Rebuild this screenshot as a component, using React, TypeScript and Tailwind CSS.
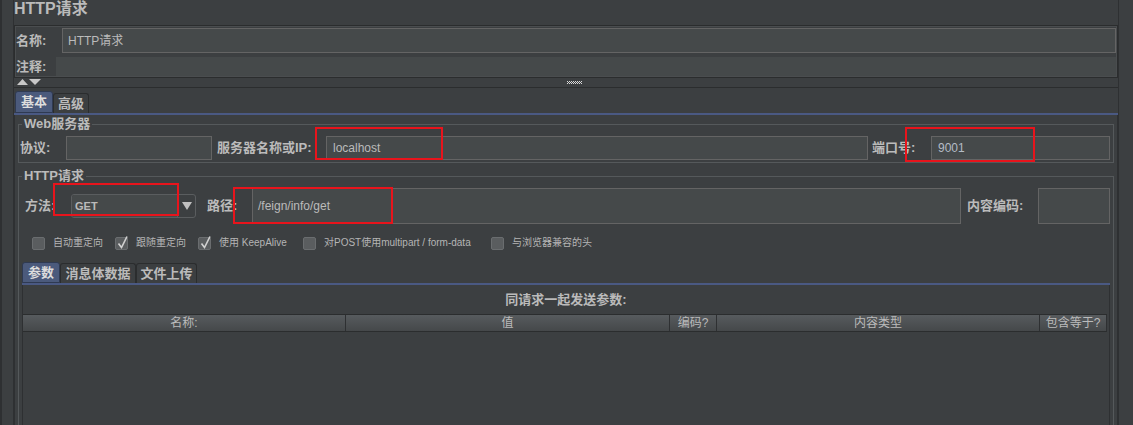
import React from "react";

function Cb({ checked }: { checked?: boolean }) {
  return (
    <span className="relative w-[13px] h-[13px] shrink-0 rounded-[2px] border border-[#6a6d6f] bg-[#5a5d5f]">
      {checked && (
        <svg className="absolute left-[0px] top-[-3px]" width="13" height="15" viewBox="0 0 13 15">
          <path d="M2.5 8.5 L5.5 12.5 L11 1.5" stroke="#d2d2d2" strokeWidth="1.6" fill="none" />
        </svg>
      )}
    </span>
  );
}

function CbItem({ checked, label, w }: { checked?: boolean; label: string; w: string }) {
  return (
    <div className={`flex items-center gap-[8px] shrink-0 ${w}`}>
      <Cb checked={checked} />
      <span className="text-[10px] leading-[14px] text-[#b5b5b5] whitespace-nowrap">{label}</span>
    </div>
  );
}

export default function App() {
  return (
    <div className="relative flex w-[1133px] h-[425px] overflow-hidden bg-[#3c3f41] text-[#bbbbbb] font-[family-name:Liberation_Sans,Noto_Sans_CJK_SC,sans-serif]">
      {/* left strip */}
      <div className="w-[14px] shrink-0 border-l-[2px] border-r border-[#2e3032]" />

      {/* main column */}
      <div className="w-[1104px] shrink-0 flex flex-col overflow-hidden">
        <div className="shrink-0 h-[22px] text-[16px] leading-[16px] font-bold pt-[1px]">HTTP请求</div>

        {/* name panel */}
        <div className="shrink-0 mt-[3px] h-[53px] border border-[#2b2d2e] shadow-[inset_0_0_0_1px_#4a4d4f] pl-[1px] pr-[1px] flex flex-col">
          <div className="shrink-0 mt-[2px] h-[25px] flex items-center">
            <div className="w-[46px] text-[13px] font-bold">名称:</div>
            <div className="flex-1 h-[25px] bg-[#45494a] border border-[#646464] px-[5px] flex items-center text-[12px]">HTTP请求</div>
          </div>
          <div className="shrink-0 mt-[4px] h-[19px] flex items-center">
            <div className="w-[40px] text-[13px] font-bold">注释:</div>
            <div className="flex-1 h-[19px] bg-[#45494a]" />
          </div>
        </div>

        {/* splitter */}
        <div className="shrink-0 relative h-[10px] border-b border-[#2b2d2e]">
          <svg className="absolute left-[3px] top-[1px]" width="24" height="7" viewBox="0 0 24 7">
            <path d="M0 6 L5.5 0 L11 6 Z" fill="#c8c8c8" />
            <path d="M12 0 L24 0 L18 6 Z" fill="#c8c8c8" />
          </svg>
          <svg className="absolute left-[553px] top-[3px]" width="15" height="3" viewBox="0 0 15 3">
            <path d="M0 0h1v1H0zM2 0h1v1H2zM4 0h1v1H4zM6 0h1v1H6zM8 0h1v1H8zM10 0h1v1h-1zM12 0h1v1h-1zM14 0h1v1h-1zM1 1h1v1H1zM3 1h1v1H3zM5 1h1v1H5zM7 1h1v1H7zM9 1h1v1H9zM11 1h1v1h-1zM13 1h1v1h-1zM0 2h1v1H0zM2 2h1v1H2zM4 2h1v1H4zM6 2h1v1H6zM8 2h1v1H8zM10 2h1v1h-1zM12 2h1v1h-1zM14 2h1v1h-1z" fill="#d8d8d8" />
          </svg>
        </div>

        {/* tabs */}
        <div className="shrink-0 mt-[3px] h-[22px] flex items-end pl-[1px]">
          <div className="w-[38px] h-[22px] rounded-t-[3px] bg-[#4b5a7c] border border-[#2f3a52] flex items-center justify-center text-[13px] font-bold text-[#dddddd]">基本</div>
          <div className="w-[36px] h-[20px] rounded-t-[3px] border border-b-0 border-[#2b2d2e] flex items-center justify-center text-[13px] font-bold">高级</div>
        </div>
        <div className="shrink-0 h-[2px] bg-[#4a5983]" />

        {/* tab content */}
        <div className="shrink-0 h-[320px] border-l border-r border-[#2e3032] pl-[3px] pr-[3px] flex flex-col">
          <fieldset className="shrink-0 mt-[2px] border border-[#55595b] p-0 m-0">
            <legend className="ml-[3px] px-[2px] text-[13px] leading-[14px] font-bold">Web服务器</legend>
            <div className="pt-[5px] pb-[2px] pr-[3px] h-[31px] flex items-center">
              <div className="w-[47px] pl-[1px] text-[13px] font-bold">协议:</div>
              <div className="w-[146px] h-[24px] bg-[#45494a] border border-[#646464]" />
              <div className="w-[114px] pl-[5px] text-[13px] font-bold whitespace-nowrap">服务器名称或IP:</div>
              <div className="flex-1 h-[24px] bg-[#45494a] border border-[#646464] px-[6px] flex items-center text-[12px]">localhost</div>
              <div className="w-[63px] pl-[4px] text-[13px] font-bold">端口号:</div>
              <div className="w-[179px] h-[24px] bg-[#45494a] border border-[#646464] px-[6px] flex items-center text-[12px] text-[#b4bcc6]">9001</div>
            </div>
          </fieldset>

          <fieldset className="shrink-0 mt-[6px] h-[300px] border border-b-0 border-[#55595b] p-0 m-0">
            <legend className="ml-[3px] px-[2px] text-[13px] leading-[14px] font-bold">HTTP请求</legend>
            <div className="flex flex-col pr-[3px]">
              <div className="shrink-0 mt-[5px] h-[36px] flex items-center">
                <div className="w-[52px] pl-[6px] text-[13px] font-bold">方法:</div>
                <div className="w-[125px] h-[24px] rounded-[3px] border border-[#5a5d5f] flex overflow-hidden">
                  <div className="flex-1 bg-[#45494a] pl-[3px] flex items-center text-[11px] font-bold">GET</div>
                  <div className="w-[18px] border-l border-[#5a5d5f] flex items-center justify-center">
                    <svg width="10" height="8" viewBox="0 0 10 8"><path d="M0 0 L10 0 L5 8 Z" fill="#c0c0c0" /></svg>
                  </div>
                </div>
                <div className="w-[56px] pl-[11px] text-[13px] font-bold">路径:</div>
                <div className="flex-1 h-[36px] bg-[#45494a] border border-[#646464] px-[5px] flex items-center text-[12px]">/feign/info/get</div>
                <div className="w-[77px] pl-[6px] text-[13px] font-bold">内容编码:</div>
                <div className="w-[72px] h-[36px] bg-[#45494a] border border-[#646464]" />
              </div>

              <div className="shrink-0 mt-[12px] h-[14px] pl-[13px] flex items-center">
                <CbItem label="自动重定向" w="w-[83px]" />
                <CbItem checked label="跟随重定向" w="w-[83px]" />
                <CbItem checked label="使用 KeepAlive" w="w-[105px]" />
                <CbItem label="对POST使用multipart / form-data" w="w-[188px]" />
                <CbItem label="与浏览器兼容的头" w="w-[120px]" />
              </div>

              {/* sub tabs */}
              <div className="shrink-0 mt-[12px] pl-[3px] h-[21px] flex items-end">
                <div className="w-[38px] h-[21px] rounded-t-[3px] bg-[#4b5a7c] border border-[#2f3a52] flex items-center justify-center text-[13px] font-bold text-[#dddddd]">参数</div>
                <div className="w-[76px] h-[20px] rounded-t-[3px] border border-b-0 border-[#2b2d2e] flex items-center justify-center text-[13px] font-bold">消息体数据</div>
                <div className="w-[61px] h-[20px] rounded-t-[3px] border border-b-0 border-[#2b2d2e] flex items-center justify-center text-[13px] font-bold">文件上传</div>
              </div>
              <div className="shrink-0 ml-[3px] h-[2px] bg-[#4a5983]" />
              <div className="shrink-0 ml-[3px] h-[200px] border-l border-r border-[#2e3032] flex flex-col">
                <div className="shrink-0 h-[29px] flex items-center justify-center text-[13px] font-bold">同请求一起发送参数:</div>
                <div className="shrink-0 h-[18px] mr-[2px] flex border-t border-b border-[#2b2d2e] bg-gradient-to-b from-[#575b5e] to-[#45484a] text-[12px] leading-[16px]">
                  <div className="w-[323px] border-r border-[#2e3032] text-center">名称:</div>
                  <div className="w-[324px] border-r border-[#2e3032] text-center">值</div>
                  <div className="w-[47px] border-r border-[#2e3032] text-center">编码?</div>
                  <div className="w-[323px] border-r border-[#2e3032] text-center">内容类型</div>
                  <div className="flex-1 border-r border-[#2e3032] text-center">包含等于?</div>
                </div>
                <div className="flex-1" />
              </div>
            </div>
          </fieldset>
        </div>
      </div>

      {/* right strip */}
      <div className="flex-1 border-l border-[#2e3032]" />

      {/* red annotation boxes */}
      <div className="absolute left-[315px] top-[127px] w-[128px] h-[33px] border-2 border-[#e8141c]" />
      <div className="absolute left-[905px] top-[127px] w-[130px] h-[35px] border-2 border-[#e8141c]" />
      <div className="absolute left-[53px] top-[183px] w-[126px] h-[33px] border-2 border-[#e8141c]" />
      <div className="absolute left-[233px] top-[187px] w-[160px] h-[37px] border-2 border-[#e8141c]" />
    </div>
  );
}
